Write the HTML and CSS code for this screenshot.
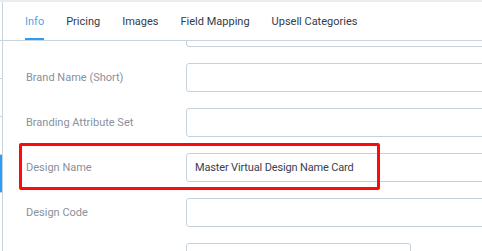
FILE: index.html
```html
<!DOCTYPE html>
<html lang="en">
<head>
    <meta charset="UTF-8">
    <meta name="viewport" content="width=device-width, initial-scale=1.0">
    <title>Product Info</title>
    <link rel="stylesheet" href="styles.css">
</head>
<body>
    <div class="page">
        <div class="sidebar">
            <div class="side-item"></div>
            <div class="side-item"></div>
            <div class="side-item"></div>
            <div class="side-item active"></div>
            <div class="side-item"></div>
        </div>

        <div class="main">
            <div class="tabs">
                <a class="tab active">Info</a>
                <a class="tab">Pricing</a>
                <a class="tab">Images</a>
                <a class="tab">Field Mapping</a>
                <a class="tab">Upsell Categories</a>
            </div>

            <div class="form">
                <div class="rows">
                    <div class="row">
                        <label class="label"></label>
                        <input type="text" class="field">
                    </div>
                    <div class="row">
                        <label class="label">Brand Name (Short)</label>
                        <input type="text" class="field">
                    </div>
                    <div class="row">
                        <label class="label">Branding Attribute Set</label>
                        <input type="text" class="field">
                    </div>
                    <div class="row">
                        <label class="label">Design Name</label>
                        <input type="text" class="field" value="Master Virtual Design Name Card">
                    </div>
                    <div class="row">
                        <label class="label">Design Code</label>
                        <input type="text" class="field">
                    </div>
                    <div class="row">
                        <label class="label"></label>
                        <input type="text" class="field short">
                    </div>
                </div>
                <!-- annotation around the Design Name row -->
                <div class="highlight"></div>
            </div>
        </div>
    </div>
</body>
</html>
```

FILE: styles.css
```css
body {
    margin: 0;
    font-family: 'Roboto', sans-serif;
    background-color: #fff;
    overflow: hidden;
}
.page {
    display: flex;
    height: 251px;
    border-top: 2px solid #ececec;
    box-sizing: border-box;
}
.sidebar {
    width: 2px;
    flex-shrink: 0;
    border-right: 1px solid #c9d4df;
    padding-top: 38px;
}
.side-item {
    height: 37px;
    border-top: 1px solid #c9d4df;
}
.side-item.active {
    background-color: #2d9cf5;
}
.main {
    flex: 1;
    min-width: 0;
    display: flex;
    flex-direction: column;
}
.tabs {
    display: flex;
    gap: 22px;
    height: 38px;
    padding-left: 22px;
    border-bottom: 1px solid #c9d4df;
    flex-shrink: 0;
}
.tab {
    display: flex;
    align-items: center;
    font-size: 11px;
    color: #343b4b;
    border-bottom: 2px solid transparent;
    padding-top: 2px;
    cursor: pointer;
}
.tab.active {
    color: #5c9fe6;
    border-bottom-color: #2d9cf5;
}
.form {
    position: relative;
    flex: 1;
    overflow: hidden;
}
.rows {
    margin-top: -23px;
}
.row {
    display: flex;
    align-items: center;
    height: 29px;
    margin-bottom: 16px;
}
.label {
    width: 160px;
    padding-left: 23px;
    flex-shrink: 0;
    font-size: 11px;
    color: #8a909b;
}
.field {
    width: 320px;
    height: 29px;
    flex-shrink: 0;
    box-sizing: border-box;
    border: 1px solid #c6d1de;
    border-radius: 3px;
    padding: 0 8px;
    font-family: inherit;
    font-size: 11px;
    letter-spacing: -0.15px;
    color: #3b4150;
}
.field.short {
    width: 225px;
}
.highlight {
    position: absolute;
    left: 16px;
    top: 102px;
    width: 361px;
    height: 47px;
    border: 3px solid #ff0a0a;
    border-radius: 2px;
    box-sizing: border-box;
}
```
